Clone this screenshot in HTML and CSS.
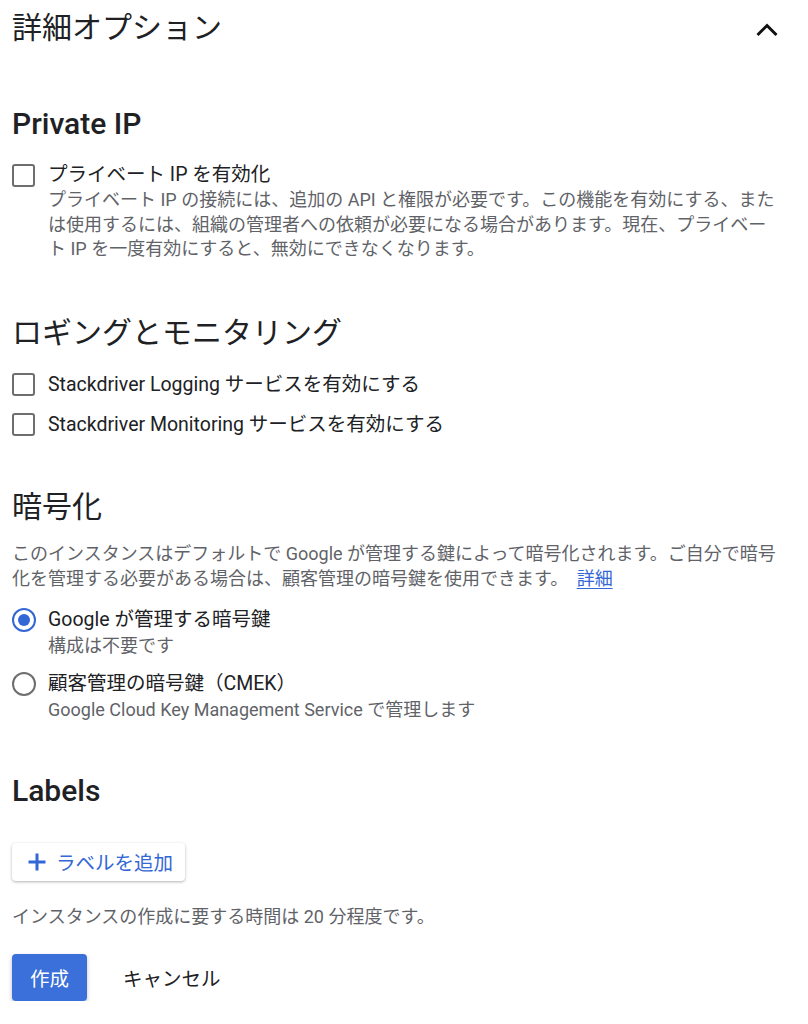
FILE: index.html
```html
<!DOCTYPE html>
<html lang="ja">
  <head>
    <meta charset="UTF-8" />
    <meta name="viewport" content="width=device-width, initial-scale=1.0" />
    <title>詳細オプション</title>
    <link rel="stylesheet" href="styles.css">
  </head>
  <body>
    <div class="panel">
      <div class="panel__header">
        <span class="panel__title">詳細オプション</span>
        <svg class="panel__chevron" width="24" height="24" viewBox="0 0 24 24"><path d="M2.5 17L12 7.5l9.5 9.5" fill="none" stroke="#111" stroke-width="3"/></svg>
      </div>

      <section class="section">
        <h2 class="section__title section__title--bold">Private IP</h2>
        <label class="check">
          <span class="check__box"></span>
          <span class="check__text">プライベート IP を有効化</span>
        </label>
        <p class="hint hint--indent">プライベート IP の接続には、追加の API と権限が必要です。この機能を有効にする、または使用するには、組織の管理者への依頼が必要になる場合があります。現在、プライベート IP を一度有効にすると、無効にできなくなります。</p>
      </section>

      <section class="section section--logging">
        <h2 class="section__title">ロギングとモニタリング</h2>
        <div class="checks">
          <label class="check">
            <span class="check__box"></span>
            <span class="check__text">Stackdriver Logging サービスを有効にする</span>
          </label>
          <label class="check">
            <span class="check__box"></span>
            <span class="check__text">Stackdriver Monitoring サービスを有効にする</span>
          </label>
        </div>
      </section>

      <section class="section section--crypto">
        <h2 class="section__title">暗号化</h2>
        <p class="hint hint--intro">このインスタンスはデフォルトで Google が管理する鍵によって暗号化されます。ご自分で暗号化を管理する必要がある場合は、顧客管理の暗号鍵を使用できます。 <a class="link" href="#">詳細</a></p>
        <div class="radios">
          <label class="radio">
            <span class="radio__dot radio__dot--on"></span>
            <span class="radio__body">
              <span class="check__text">Google が管理する暗号鍵</span>
              <span class="hint">構成は不要です</span>
            </span>
          </label>
          <label class="radio">
            <span class="radio__dot"></span>
            <span class="radio__body">
              <span class="check__text">顧客管理の暗号鍵（CMEK）</span>
              <span class="hint">Google Cloud Key Management Service で管理します</span>
            </span>
          </label>
        </div>
      </section>

      <section class="section">
        <h2 class="section__title section__title--bold">Labels</h2>
        <button class="btn-add">
          <svg width="20" height="20" viewBox="0 0 20 20"><path d="M10 1.5v17M1.5 10h17" stroke="#3367d6" stroke-width="3"/></svg>
          <span>ラベルを追加</span>
        </button>
      </section>

      <p class="hint note">インスタンスの作成に要する時間は 20 分程度です。</p>

      <div class="actions">
        <button class="btn-primary">作成</button>
        <button class="btn-text">キャンセル</button>
      </div>
    </div>
  </body>
</html>
```

FILE: styles.css
```css
*{margin:0;padding:0;box-sizing:border-box;}
body{font-family:Roboto,"Noto Sans CJK JP",sans-serif;color:#202124;background:#fff;}
.panel{padding:0 28px 0 12px;}
.panel__header{height:56px;display:flex;justify-content:space-between;align-items:center;}
.panel__title{font-size:30px;line-height:36px;}
.panel__chevron{margin-right:1px;margin-top:4px;}

.section{margin-top:50px;}
.section--logging{margin-top:53px;}
.section--crypto{margin-top:51px;}
.section__title{font-size:30px;line-height:36px;font-weight:400;}
.section__title--bold{font-weight:500;}

.check{display:flex;align-items:center;gap:13px;margin-top:20px;}
.checks .check{margin-top:14px;}
.checks{padding-top:7px;}
.check__box{width:23px;height:23px;border:2px solid #6e6e6e;border-radius:3px;flex-shrink:0;}
.check__text{font-size:19.5px;line-height:26px;}

.hint{display:block;font-size:18px;line-height:24.5px;color:#5f6368;}
.hint--indent{padding-left:36px;}
.hint--intro{margin-top:16px;line-height:25px;}
.link{color:#3367d6;text-decoration:underline;text-underline-offset:3px;margin-left:4px;}

.radios{margin-top:16px;display:flex;flex-direction:column;gap:12px;}
.radio{display:flex;gap:12px;}
.radio__body{display:flex;flex-direction:column;}
.radio__body .hint{line-height:26px;}
.radio__dot{width:24px;height:24px;border:2px solid #6e6e6e;border-radius:50%;margin-top:1px;flex-shrink:0;position:relative;}
.radio__dot--on{border-color:#3367d6;}
.radio__dot--on::after{content:"";position:absolute;left:4px;top:4px;width:12px;height:12px;border-radius:50%;background:#3367d6;}

.btn-add{margin-top:34px;height:38px;padding:0 12px 0 15px;display:flex;align-items:center;gap:9px;border:none;border-radius:4px;background:#fff;box-shadow:0 1px 3px rgba(0,0,0,.3);font-family:inherit;font-size:19.5px;color:#3367d6;cursor:pointer;}

.note{margin-top:23px;line-height:26px;}

.actions{margin-top:24px;display:flex;align-items:center;gap:36px;}
.btn-primary{width:75px;height:47px;border:none;border-radius:4px;background:#3b6fd9;color:#fff;font-family:inherit;font-size:19.5px;box-shadow:0 2px 4px rgba(0,0,0,.25);cursor:pointer;}
.btn-text{border:none;background:none;font-family:inherit;font-size:19.5px;color:#202124;cursor:pointer;}
```
